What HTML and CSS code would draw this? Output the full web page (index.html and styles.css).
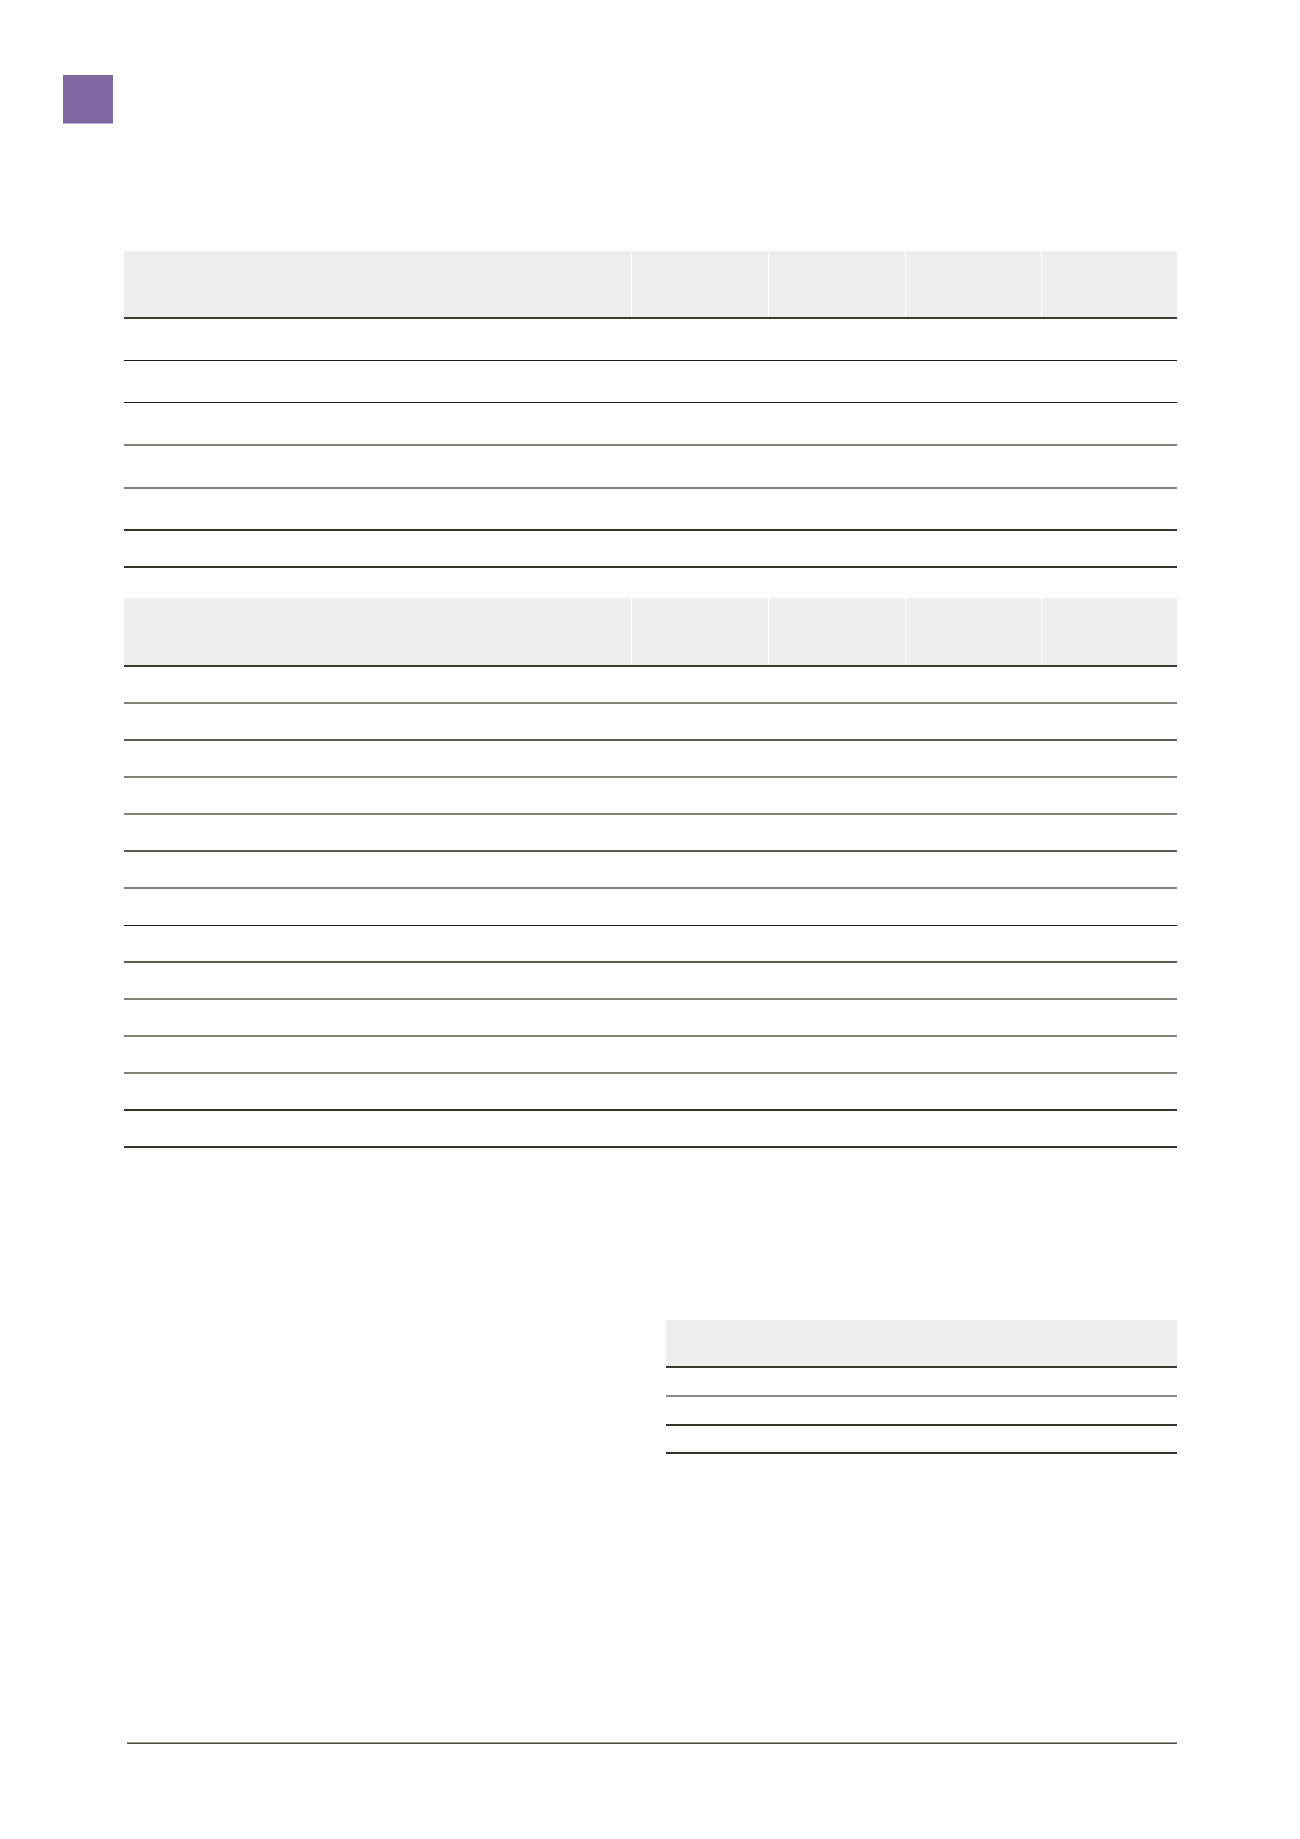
FILE: index.html
```html
<!DOCTYPE html>
<html lang="en">
<head>
<meta charset="utf-8">
<title>Tables</title>
<link rel="stylesheet" href="styles.css">
</head>
<body>
<div class="page">
  <div class="logo"></div>
  <div class="content">
    <div class="tbl t1">
      <div class="row head"><div class="c"></div><div class="c"></div><div class="c"></div><div class="c"></div><div class="c"></div></div>
      <div class="row r42 dark1"><div class="c"></div><div class="c"></div><div class="c"></div><div class="c"></div><div class="c"></div></div>
      <div class="row r42 dark1"><div class="c"></div><div class="c"></div><div class="c"></div><div class="c"></div><div class="c"></div></div>
      <div class="row r43 grey"><div class="c"></div><div class="c"></div><div class="c"></div><div class="c"></div><div class="c"></div></div>
      <div class="row r43 grey"><div class="c"></div><div class="c"></div><div class="c"></div><div class="c"></div><div class="c"></div></div>
      <div class="row r42 dark2"><div class="c"></div><div class="c"></div><div class="c"></div><div class="c"></div><div class="c"></div></div>
      <div class="row r37 dark2"><div class="c"></div><div class="c"></div><div class="c"></div><div class="c"></div><div class="c"></div></div>
    </div>

    <div class="tbl t2">
      <div class="row head h69"><div class="c"></div><div class="c"></div><div class="c"></div><div class="c"></div><div class="c"></div></div>
      <div class="row r37 grey"><div class="c"></div><div class="c"></div><div class="c"></div><div class="c"></div><div class="c"></div></div>
      <div class="row r37 midd"><div class="c"></div><div class="c"></div><div class="c"></div><div class="c"></div><div class="c"></div></div>
      <div class="row r37 grey"><div class="c"></div><div class="c"></div><div class="c"></div><div class="c"></div><div class="c"></div></div>
      <div class="row r37 grey"><div class="c"></div><div class="c"></div><div class="c"></div><div class="c"></div><div class="c"></div></div>
      <div class="row r37 midd"><div class="c"></div><div class="c"></div><div class="c"></div><div class="c"></div><div class="c"></div></div>
      <div class="row r37 grey"><div class="c"></div><div class="c"></div><div class="c"></div><div class="c"></div><div class="c"></div></div>
      <div class="row r37 dark1"><div class="c"></div><div class="c"></div><div class="c"></div><div class="c"></div><div class="c"></div></div>
      <div class="row r37 midd"><div class="c"></div><div class="c"></div><div class="c"></div><div class="c"></div><div class="c"></div></div>
      <div class="row r37 grey"><div class="c"></div><div class="c"></div><div class="c"></div><div class="c"></div><div class="c"></div></div>
      <div class="row r37 grey"><div class="c"></div><div class="c"></div><div class="c"></div><div class="c"></div><div class="c"></div></div>
      <div class="row r37 grey"><div class="c"></div><div class="c"></div><div class="c"></div><div class="c"></div><div class="c"></div></div>
      <div class="row r37 dark2"><div class="c"></div><div class="c"></div><div class="c"></div><div class="c"></div><div class="c"></div></div>
      <div class="row r37 dark2"><div class="c"></div><div class="c"></div><div class="c"></div><div class="c"></div><div class="c"></div></div>
    </div>

    <div class="tbl t3">
      <div class="row head h48"><div class="c"></div><div class="c"></div></div>
      <div class="row r29 grey1"><div class="c"></div><div class="c"></div></div>
      <div class="row r29 dark2"><div class="c"></div><div class="c"></div></div>
      <div class="row r28 dark2"><div class="c"></div><div class="c"></div></div>
    </div>
  </div>
  <div class="footer-rule"></div>
</div>
</body>
</html>
```

FILE: styles.css
```css
* {
  box-sizing: border-box;
}

html, body {
  margin: 0;
  padding: 0;
  background: #ffffff;
  font-family: "Liberation Sans", Arial, sans-serif;
}

.page {
  width: 1300px;
  min-height: 1839px;
  padding-top: 75px;
}

.logo {
  width: 50px;
  height: 49px;
  margin-left: 63px;
  background: #7f68a0;
  border-bottom: 1px solid #b9a9cf;
}

.content {
  width: 1053px;
  margin-left: 124px;
  margin-top: 127px;
}

.tbl {
  display: flex;
  flex-direction: column;
}

.t1 .row,
.t2 .row {
  display: grid;
  grid-template-columns: 507px 137px 137px 136px 136px;
}

.t2 {
  margin-top: 30px;
}

.t3 {
  width: 511px;
  margin-left: 542px;
  margin-top: 172px;
}

.t3 .row {
  display: grid;
  grid-template-columns: 376px 135px;
}

.row.head {
  height: 68px;
  border-bottom: 2px solid #3b3931;
}

.row.head .c {
  background: #eeeeee;
}

.t1 .row.head .c + .c,
.t2 .row.head .c + .c {
  border-left: 1px solid #ffffff;
}

.row.h69 {
  height: 69px;
}

.row.h48 {
  height: 48px;
}

.r42 { height: 42px; }
.r43 { height: 43px; }
.r37 { height: 37px; }
.r29 { height: 29px; }
.r28 { height: 28px; }

.dark1 {
  border-bottom: 1px solid #1c1c1a;
}

.dark2 {
  border-bottom: 2px solid #35332b;
}

.midd {
  border-bottom: 2px solid #5e5b53;
}

.grey {
  border-bottom: 2px solid #85827b;
}

.grey1 {
  border-bottom: 2px solid #8e8c88;
}

.footer-rule {
  width: 1050px;
  margin-left: 127px;
  margin-top: 288px;
  border-top: 1px solid #a29f98;
  border-bottom: 1px solid #4e4b45;
}
```
